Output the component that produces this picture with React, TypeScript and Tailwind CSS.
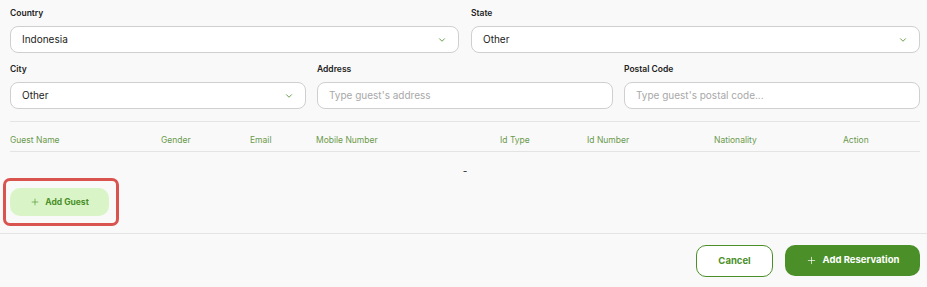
import React from 'react';
import { ChevronDown, Plus } from 'lucide-react';

const font = { fontFamily: 'Inter, "Noto Sans", sans-serif' };

const SelectBox = ({ value }: { value: string }) => (
  <div className="flex items-center justify-between h-[27px] px-[11px] bg-white border border-[#cfcfcf] rounded-[8px]">
    <span className="text-[10px] text-[#222]">{value}</span>
    <ChevronDown className="w-[10px] h-[10px] text-[#4b8f29]" strokeWidth={2} />
  </div>
);

const TextBox = ({ placeholder }: { placeholder: string }) => (
  <div className="flex items-center h-[27px] px-[11px] bg-white border border-[#cfcfcf] rounded-[8px]">
    <span className="text-[10px] text-[#a8a8a8]">{placeholder}</span>
  </div>
);

const Field = ({ label, children }: { label: string; children: React.ReactNode }) => (
  <div className="flex flex-col gap-[8px]">
    <label className="text-[8.5px] font-semibold text-[#222] leading-[10px]">{label}</label>
    {children}
  </div>
);

const columns = [
  { name: 'Guest Name', w: 'w-[151px]' },
  { name: 'Gender', w: 'w-[89px]' },
  { name: 'Email', w: 'w-[66px]' },
  { name: 'Mobile Number', w: 'w-[184px]' },
  { name: 'Id Type', w: 'w-[87px]' },
  { name: 'Id Number', w: 'w-[127px]' },
  { name: 'Nationality', w: 'w-[129px]' },
  { name: 'Action', w: 'w-[77px]' },
];

export default function App() {
  return (
    <div className="w-[927px] h-[287px] bg-[#f9f9f9] overflow-hidden" style={font}>
      <div className="pl-[10px] pt-[8px] w-[920px]">
        <div className="grid grid-cols-2 gap-x-[12px]">
          <Field label="Country">
            <SelectBox value="Indonesia" />
          </Field>
          <Field label="State">
            <SelectBox value="Other" />
          </Field>
        </div>
        <div className="grid grid-cols-3 gap-x-[11px] mt-[11px]">
          <Field label="City">
            <SelectBox value="Other" />
          </Field>
          <Field label="Address">
            <TextBox placeholder="Type guest's address" />
          </Field>
          <Field label="Postal Code">
            <TextBox placeholder="Type guest's postal code..." />
          </Field>
        </div>
        <div className="mt-[12px] border-t border-[#e4e4e4]">
          <div className="flex h-[30px] pt-[13px] border-b border-[#e4e4e4]">
            {columns.map((c) => (
              <div key={c.name} className={`${c.w} shrink-0 text-[8.5px] leading-[10px] text-[#6a9a4c]`}>
                {c.name}
              </div>
            ))}
          </div>
          <div className="flex justify-center h-[26px] pt-[14px] text-[10px] leading-[10px] text-[#222]">-</div>
        </div>
      </div>
      <div className="pl-[3px]">
        <div className="w-[116px] h-[48px] border-[3px] border-[#d9534f] rounded-[7px] pl-[4px] pt-[7px]">
          <button className="flex items-center justify-center gap-[5px] w-[99px] h-[28px] rounded-[10px] bg-[#d9f5c7] text-[#4b8f29] text-[8.5px] font-bold">
            <Plus className="w-[10px] h-[10px]" strokeWidth={1.5} />
            Add Guest
          </button>
        </div>
      </div>
      <div className="mt-[7px] border-t border-[#e4e4e4] flex justify-end gap-[12px] pt-[11px] pr-[7px]">
        <button className="w-[77px] h-[32px] rounded-[10px] border border-[#4b8f29] bg-white text-[#4b8f29] text-[9.5px] font-bold">
          Cancel
        </button>
        <button className="flex items-center justify-center gap-[6px] w-[135px] h-[31px] rounded-[10px] bg-[#4b8f29] text-white text-[9.5px] font-bold">
          <Plus className="w-[11px] h-[11px]" strokeWidth={1.5} />
          Add Reservation
        </button>
      </div>
    </div>
  );
}
